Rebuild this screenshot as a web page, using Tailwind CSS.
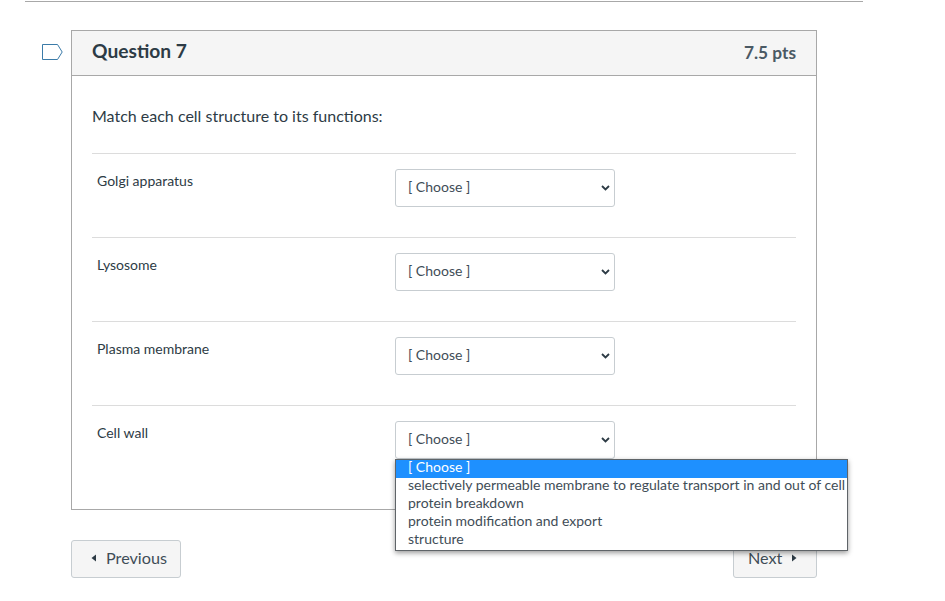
<!DOCTYPE html>
<html>
<head>
<meta charset="utf-8">
<script src="https://cdn.jsdelivr.net/npm/@tailwindcss/browser@4"></script>
</head>
<body class="bg-white font-['Lato',sans-serif] text-[#2d3b45]">
<div class="relative w-[945px] h-[601px] overflow-hidden">
    <div class="ml-[25px] w-[838px] mt-px border-t border-[#a8a8a8]"></div>

    <!-- Question -->
    <div class="relative ml-[71px] mt-[28px] w-[746px] h-[480px] border border-[#a8a8a8]">
        <svg class="absolute left-[-30px] top-[13px]" width="21" height="16" viewBox="0 0 21 16" fill="none">
            <path d="M0.5 0.5H15.5L20.2 8L15.5 15.5H0.5Z" stroke="#3b7ba8" stroke-width="1"/>
        </svg>
        <div class="flex justify-between h-[45px] bg-[#f5f5f5] border-b border-[#a8a8a8] pl-[20px] pr-[20px]">
            <h2 class="text-[19.2px] leading-[39px] font-bold">Question 7</h2>
            <span class="text-[17.3px] leading-[44px] font-bold text-[#4a5964]">7.5 pts</span>
        </div>
        <div class="px-[20px]">
            <p class="mt-[30px] mb-[27px] text-[16px] leading-[20px]">Match each cell structure to its functions:</p>
            <div class="h-[84px] border-t border-[#dcdcdc] pt-[15px] pl-[5px] flex">
                <div class="w-[298px] pt-[3px] text-[14px] leading-[18px]">Golgi apparatus</div>
                <div class="relative w-[220px] h-[38px]">
                    <select class="appearance-none w-full h-full pl-[12px] pb-[4px] bg-white border border-[#c7cdd1] rounded-[3px] text-[14px] text-[#3f4d57]"><option>[ Choose ]</option></select>
                    <svg class="absolute left-[206px] top-[16px]" width="9" height="6" viewBox="0 0 9 6" fill="none"><path d="M1 1L4.5 4.5L8 1" stroke="#2d3b45" stroke-width="1.8"/></svg>
                </div>
            </div>
            <div class="h-[84px] border-t border-[#dcdcdc] pt-[15px] pl-[5px] flex">
                <div class="w-[298px] pt-[3px] text-[14px] leading-[18px]">Lysosome</div>
                <div class="relative w-[220px] h-[38px]">
                    <select class="appearance-none w-full h-full pl-[12px] pb-[4px] bg-white border border-[#c7cdd1] rounded-[3px] text-[14px] text-[#3f4d57]"><option>[ Choose ]</option></select>
                    <svg class="absolute left-[206px] top-[16px]" width="9" height="6" viewBox="0 0 9 6" fill="none"><path d="M1 1L4.5 4.5L8 1" stroke="#2d3b45" stroke-width="1.8"/></svg>
                </div>
            </div>
            <div class="h-[84px] border-t border-[#dcdcdc] pt-[15px] pl-[5px] flex">
                <div class="w-[298px] pt-[3px] text-[14px] leading-[18px]">Plasma membrane</div>
                <div class="relative w-[220px] h-[38px]">
                    <select class="appearance-none w-full h-full pl-[12px] pb-[4px] bg-white border border-[#c7cdd1] rounded-[3px] text-[14px] text-[#3f4d57]"><option>[ Choose ]</option></select>
                    <svg class="absolute left-[206px] top-[16px]" width="9" height="6" viewBox="0 0 9 6" fill="none"><path d="M1 1L4.5 4.5L8 1" stroke="#2d3b45" stroke-width="1.8"/></svg>
                </div>
            </div>
            <div class="h-[84px] border-t border-[#dcdcdc] pt-[15px] pl-[5px] flex">
                <div class="w-[298px] pt-[3px] text-[14px] leading-[18px]">Cell wall</div>
                <div class="relative w-[220px] h-[38px]">
                    <select class="appearance-none w-full h-full pl-[12px] pb-[4px] bg-white border border-[#c7cdd1] rounded-[3px] text-[14px] text-[#3f4d57]"><option>[ Choose ]</option></select>
                    <svg class="absolute left-[206px] top-[16px]" width="9" height="6" viewBox="0 0 9 6" fill="none"><path d="M1 1L4.5 4.5L8 1" stroke="#2d3b45" stroke-width="1.8"/></svg>
                </div>
            </div>
        </div>
    </div>

    <!-- Nav buttons -->
    <div class="ml-[71px] mt-[30px] w-[746px] flex justify-between">
        <button class="w-[110px] h-[38px] pl-[19px] pb-[2px] flex items-center gap-[9px] bg-[#f5f5f5] border border-[#c7cdd1] rounded-[3px] text-[16.2px] text-[#3f4d57]">
            <svg width="6" height="8" viewBox="0 0 6 8"><path d="M5 0.5V7.5L0.5 4Z" fill="#2d3b45"/></svg>
            Previous
        </button>
        <button class="w-[84px] h-[38px] pl-[14px] pb-[2px] flex items-center gap-[9px] bg-[#f5f5f5] border border-[#c7cdd1] rounded-[3px] text-[16.2px] text-[#3f4d57]">
            Next
            <svg width="6" height="8" viewBox="0 0 6 8"><path d="M1 0.5V7.5L5.5 4Z" fill="#2d3b45"/></svg>
        </button>
    </div>

    <!-- Open dropdown list -->
    <ul class="absolute left-[395px] top-[459px] w-[453px] h-[92px] bg-white border border-[#5f6468] shadow-[0_2px_5px_rgba(0,0,0,0.4)] text-[14px] leading-[14px] text-[#3f4d57] overflow-hidden">
        <li class="h-[18px] pl-[12px] bg-[#1e90ff] text-white">[ Choose ]</li>
        <li class="h-[18px] pl-[12px] whitespace-nowrap">selectively permeable membrane to regulate transport in and out of cell</li>
        <li class="h-[18px] pl-[12px]">protein breakdown</li>
        <li class="h-[18px] pl-[12px]">protein modification and export</li>
        <li class="h-[18px] pl-[12px]">structure</li>
    </ul>
</div>
</body>
</html>
